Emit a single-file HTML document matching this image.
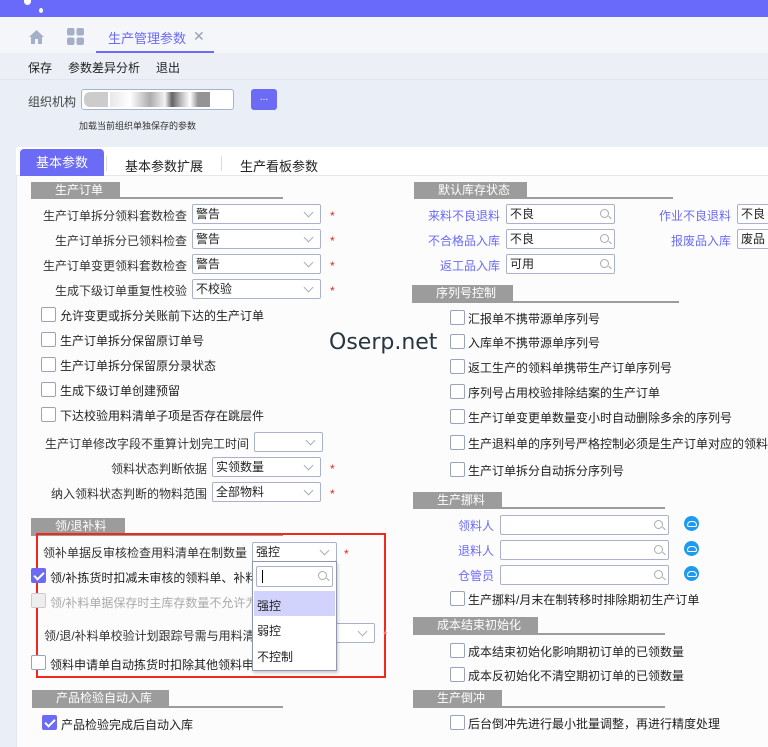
<!DOCTYPE html>
<html><head><meta charset="utf-8"><style>
*{margin:0;padding:0;box-sizing:border-box}
body{width:768px;height:728px;overflow:hidden;background:#eaeef7;font-family:"Liberation Sans","Noto Sans CJK SC",sans-serif;font-size:12px;color:#222;position:relative}
.a{position:absolute;white-space:nowrap}
.sec{position:absolute;height:17px;background:#9c9c9c;color:#fff;font-size:12px;line-height:17px;padding-left:24px}
.ln{position:absolute;height:2px;background:#9c9c9c}
.sel{position:absolute;height:20px;border:1px solid #a9b2c8;border-radius:2px;background:#fff;font-size:12px;line-height:18px;padding-left:3px}
.sel:after{content:"";position:absolute;right:8px;top:4px;width:6px;height:6px;border-right:1px solid #a8aec0;border-bottom:1px solid #a8aec0;transform:rotate(45deg)}
.srch{position:absolute;height:20px;border:1px solid #a9b2c8;border-radius:2px;background:#fff;font-size:12px;line-height:18px;padding-left:3px}
.srch i{position:absolute;right:5px;top:4px;width:9px;height:9px;border:1px solid #aaa;border-radius:50%}
.srch i:after{content:"";position:absolute;left:7px;top:7px;width:4px;height:1px;background:#aaa;transform:rotate(45deg)}
.lbl{position:absolute;text-align:right;white-space:nowrap;font-size:12px;color:#333}
.cb{position:absolute;width:15px;height:15px;border:1px solid #9aa3ba;border-radius:2px;background:#fff}
.cb.on{background:#6b6bf5;border-color:#6b6bf5}
.cb.on:after{content:"";position:absolute;left:4px;top:1px;width:4px;height:8px;border-right:2px solid #fff;border-bottom:2px solid #fff;transform:rotate(45deg)}
.star{position:absolute;color:#e22;font-size:12px}
.cloud{position:absolute;width:15px;height:15px;border-radius:50%;background:#1e9bf0}
.cloud:after{content:"";position:absolute;left:3px;top:5px;width:8px;height:4px;border:1px solid #fff;border-radius:4px 4px 2px 2px}
</style></head><body>
<div class="a" style="left:0;top:0;width:768px;height:17px;background:#6969fa"></div>
<div class="a" style="left:24px;top:0;width:7px;height:5px;background:#fff;border-radius:0 0 4px 4px"></div>
<div class="a" style="left:39px;top:8px;width:4px;height:5px;background:#fff;border-radius:50%"></div>
<div class="a" style="left:0;top:17px;width:768px;height:36px;background:#f5f6fa"></div>
<svg class="a" style="left:28px;top:29px" width="17" height="16" viewBox="0 0 17 16"><path d="M8.5 1 L16 8 H14 V15 H10 V10 H7 V15 H3 V8 H1 Z" fill="#a5b0c8"/></svg>
<svg class="a" style="left:67px;top:28px" width="17" height="17"><rect x="0" y="0" width="7.5" height="7.5" rx="2" fill="#a5b0c8"/><rect x="9.5" y="0" width="7.5" height="7.5" rx="2" fill="#a5b0c8"/><rect x="0" y="9.5" width="7.5" height="7.5" rx="2" fill="#a5b0c8"/><rect x="9.5" y="9.5" width="7.5" height="7.5" rx="2" fill="#a5b0c8"/></svg>
<div class="a" style="left:108px;top:28px;font-size:13px;color:#6b6bf5">生产管理参数</div>
<div class="a" style="left:193px;top:28px;font-size:14px;color:#9aa0b4">✕</div>
<div class="a" style="left:96px;top:51px;width:118px;height:2px;background:#6b6bf5"></div>
<div class="a" style="left:0;top:53px;width:768px;height:27px;background:#eceff6;border-bottom:1px solid #e2e5ee"></div>
<div class="a" style="left:28px;top:59px">保存</div>
<div class="a" style="left:68px;top:59px">参数差异分析</div>
<div class="a" style="left:156px;top:59px">退出</div>
<div class="a" style="left:28px;top:93px;color:#444">组织机构</div>
<div class="a" style="left:81px;top:89px;width:153px;height:21px;background:#fff;border:1px solid #a9b2c8;border-radius:3px"></div>
<div class="a" style="left:84px;top:92px;width:24px;height:15px;background:#aaa;border-radius:6px 0 0 6px;opacity:.6"></div>
<div class="a" style="left:110px;top:92px;width:100px;height:15px;background:linear-gradient(90deg,#ddd 0,#fff 20%,#888 40%,#eee 55%,#222 62%,#aaa 72%,#fff 80%,#666 88%,#666 100%);opacity:.7"></div>
<div class="a" style="left:251px;top:89px;width:26px;height:21px;background:#6b6bf5;border-radius:3px;color:#fff;text-align:center;font-size:10px;line-height:18px">...</div>
<div class="a" style="left:79px;top:119px;font-size:9px;color:#333">加载当前组织单独保存的参数</div>

<div class="a" style="left:16px;top:147px;width:760px;height:600px;background:#fcfcfd;border-radius:4px 0 0 0;border-left:1px solid #e3e6ee"></div>
<div class="a" style="left:16px;top:147px;width:760px;height:29px;background:#fff;border-bottom:1px solid #e3e6ee"></div>
<div class="a" style="left:20px;top:149px;width:84px;height:27px;background:#6b6bf5;border-radius:4px 4px 0 0;color:#fff;font-size:13px;text-align:center;line-height:28px">基本参数</div>
<div class="a" style="left:106px;top:156px;width:1px;height:15px;background:#ddd"></div>
<div class="a" style="left:125px;top:156px;font-size:13px">基本参数扩展</div>
<div class="a" style="left:221px;top:156px;width:1px;height:15px;background:#ddd"></div>
<div class="a" style="left:240px;top:156px;font-size:13px">生产看板参数</div>

<div class="ln" style="left:31px;top:197px;width:252px"></div><div class="sec" style="left:31px;top:182px;width:89px">生产订单</div>
<div class="lbl" style="left:0;width:187px;top:207px">生产订单拆分领料套数检查</div><div class="sel" style="left:192px;top:204px;width:129px">警告</div><div class="star" style="left:330px;top:209px">*</div>
<div class="lbl" style="left:0;width:187px;top:232px">生产订单拆分已领料检查</div><div class="sel" style="left:192px;top:229px;width:129px">警告</div><div class="star" style="left:330px;top:234px">*</div>
<div class="lbl" style="left:0;width:187px;top:257px">生产订单变更领料套数检查</div><div class="sel" style="left:192px;top:254px;width:129px">警告</div><div class="star" style="left:330px;top:259px">*</div>
<div class="lbl" style="left:0;width:187px;top:282px">生成下级订单重复性校验</div><div class="sel" style="left:192px;top:279px;width:129px">不校验</div><div class="star" style="left:330px;top:284px">*</div>
<div class="cb" style="left:41px;top:307px"></div><div class="a" style="left:60px;top:307px">允许变更或拆分关账前下达的生产订单</div>
<div class="cb" style="left:41px;top:332px"></div><div class="a" style="left:60px;top:332px">生产订单拆分保留原订单号</div>
<div class="cb" style="left:41px;top:357px"></div><div class="a" style="left:60px;top:357px">生产订单拆分保留原分录状态</div>
<div class="cb" style="left:41px;top:382px"></div><div class="a" style="left:60px;top:382px">生成下级订单创建预留</div>
<div class="cb" style="left:41px;top:407px"></div><div class="a" style="left:60px;top:407px">下达校验用料清单子项是否存在跳层件</div>
<div class="lbl" style="left:0;width:249px;top:435px">生产订单修改字段不重算计划完工时间</div><div class="sel" style="left:254px;top:432px;width:69px"></div>
<div class="lbl" style="left:0;width:207px;top:460px">领料状态判断依据</div><div class="sel" style="left:212px;top:457px;width:109px">实领数量</div><div class="star" style="left:330px;top:462px">*</div>
<div class="lbl" style="left:0;width:207px;top:485px">纳入领料状态判断的物料范围</div><div class="sel" style="left:212px;top:482px;width:109px">全部物料</div><div class="star" style="left:330px;top:487px">*</div>

<div class="ln" style="left:31px;top:534px;width:252px"></div><div class="sec" style="left:31px;top:518px;width:94px">领/退补料</div>
<div class="a" style="left:36px;top:533px;width:350px;height:145px;border:2px solid #f0281e"></div>
<div class="a" style="left:43px;top:544px;color:#333">领补单据反审核检查用料清单在制数量</div>
<div class="sel" style="left:252px;top:542px;width:85px">强控</div><div class="star" style="left:344px;top:547px">*</div>
<div class="cb on" style="left:31px;top:568px"></div><div class="a" style="left:50px;top:569px">领/补拣货时扣减未审核的领料单、补料</div>
<div class="cb" style="left:31px;top:593px;background:#eee;border-color:#ccc"></div><div class="a" style="left:50px;top:594px;color:#aaa">领/补料单据保存时主库存数量不允许为</div>
<div class="a" style="left:44px;top:627px;color:#333">领/退/补料单校验计划跟踪号需与用料清</div>
<div class="sel" style="left:330px;top:623px;width:45px"></div><div class="star" style="left:383px;top:628px;color:#f88">*</div>
<div class="cb" style="left:31px;top:655px"></div><div class="a" style="left:50px;top:656px">领料申请单自动拣货时扣除其他领料申请单</div>
<div class="a" style="left:252px;top:561px;width:85px;height:110px;background:#fff;border:1px solid #8f96ad;box-shadow:1px 2px 3px rgba(0,0,0,.2)"></div>
<div class="srch" style="left:256px;top:566px;width:77px;height:21px"><span style="display:inline-block;width:1px;height:13px;background:#000;margin-top:3px;margin-left:2px"></span><i></i></div>
<div class="a" style="left:254px;top:591px;width:81px;height:25px;background:#d2d3fc"></div>
<div class="a" style="left:257px;top:597px">强控</div>
<div class="a" style="left:257px;top:622px">弱控</div>
<div class="a" style="left:257px;top:648px">不控制</div>

<div class="ln" style="left:32px;top:706px;width:251px"></div><div class="sec" style="left:32px;top:690px;width:137px">产品检验自动入库</div>
<div class="cb on" style="left:42px;top:715px"></div><div class="a" style="left:61px;top:716px">产品检验完成后自动入库</div>

<div class="a" style="left:329px;top:330px;font-size:22px;color:#27363f;font-family:'DejaVu Sans',sans-serif">Oserp.net</div>

<div class="ln" style="left:414px;top:197px;width:259px"></div><div class="sec" style="left:414px;top:182px;width:113px">默认库存状态</div>
<div class="lbl" style="left:400px;width:100px;top:207px;color:#6b6bf5">来料不良退料</div><div class="srch" style="left:506px;top:204px;width:109px">不良<i></i></div>
<div class="lbl" style="left:400px;width:100px;top:232px;color:#6b6bf5">不合格品入库</div><div class="srch" style="left:506px;top:229px;width:109px">不良<i></i></div>
<div class="lbl" style="left:400px;width:100px;top:257px;color:#6b6bf5">返工品入库</div><div class="srch" style="left:506px;top:254px;width:109px">可用<i></i></div>
<div class="lbl" style="left:630px;width:101px;top:207px;color:#6b6bf5">作业不良退料</div><div class="srch" style="left:737px;top:204px;width:50px">不良</div>
<div class="lbl" style="left:630px;width:101px;top:232px;color:#6b6bf5">报废品入库</div><div class="srch" style="left:737px;top:229px;width:50px">废品</div>

<div class="ln" style="left:412px;top:301px;width:267px"></div><div class="sec" style="left:412px;top:285px;width:101px">序列号控制</div>
<div class="cb" style="left:450px;top:310px"></div><div class="a" style="left:468px;top:310px">汇报单不携带源单序列号</div>
<div class="cb" style="left:450px;top:334px"></div><div class="a" style="left:468px;top:334px">入库单不携带源单序列号</div>
<div class="cb" style="left:450px;top:359px"></div><div class="a" style="left:468px;top:359px">返工生产的领料单携带生产订单序列号</div>
<div class="cb" style="left:450px;top:384px"></div><div class="a" style="left:468px;top:384px">序列号占用校验排除结案的生产订单</div>
<div class="cb" style="left:450px;top:409px"></div><div class="a" style="left:468px;top:409px">生产订单变更单数量变小时自动删除多余的序列号</div>
<div class="cb" style="left:450px;top:435px"></div><div class="a" style="left:468px;top:435px">生产退料单的序列号严格控制必须是生产订单对应的领料</div>
<div class="cb" style="left:450px;top:462px"></div><div class="a" style="left:468px;top:462px">生产订单拆分自动拆分序列号</div>

<div class="ln" style="left:413px;top:507px;width:252px"></div><div class="sec" style="left:413px;top:492px;width:89px">生产挪料</div>
<div class="lbl" style="left:400px;width:94px;top:517px;color:#6b6bf5">领料人</div><div class="srch" style="left:500px;top:515px;width:169px"><i></i></div><div class="cloud" style="left:684px;top:516px"></div>
<div class="lbl" style="left:400px;width:94px;top:542px;color:#6b6bf5">退料人</div><div class="srch" style="left:500px;top:540px;width:169px"><i></i></div><div class="cloud" style="left:684px;top:541px"></div>
<div class="lbl" style="left:400px;width:94px;top:567px;color:#6b6bf5">仓管员</div><div class="srch" style="left:500px;top:565px;width:169px"><i></i></div><div class="cloud" style="left:684px;top:566px"></div>
<div class="cb" style="left:450px;top:591px"></div><div class="a" style="left:468px;top:591px">生产挪料/月末在制转移时排除期初生产订单</div>

<div class="ln" style="left:413px;top:633px;width:252px"></div><div class="sec" style="left:413px;top:617px;width:125px">成本结束初始化</div>
<div class="cb" style="left:450px;top:643px"></div><div class="a" style="left:468px;top:643px">成本结束初始化影响期初订单的已领数量</div>
<div class="cb" style="left:450px;top:667px"></div><div class="a" style="left:468px;top:667px">成本反初始化不清空期初订单的已领数量</div>

<div class="ln" style="left:413px;top:706px;width:252px"></div><div class="sec" style="left:413px;top:690px;width:89px">生产倒冲</div>
<div class="cb" style="left:450px;top:715px"></div><div class="a" style="left:468px;top:715px">后台倒冲先进行最小批量调整，再进行精度处理</div>
</body></html>
